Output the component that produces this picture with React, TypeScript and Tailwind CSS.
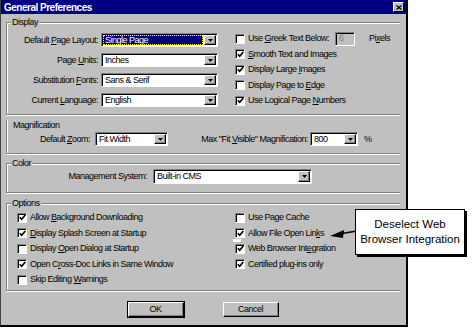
import React from "react";

const Mn = ({ t, i }: { t: string; i?: number }) =>
  i === undefined ? (
    <>{t}</>
  ) : (
    <>
      {t.slice(0, i)}
      <u>{t[i]}</u>
      {t.slice(i + 1)}
    </>
  );

function Box({ on }: { on?: boolean }) {
  return (
    <span className="flex h-[10px] w-[10px] shrink-0 items-center justify-center border border-t-[#808080] border-l-[#808080] border-b-white border-r-white bg-white shadow-[inset_1px_1px_0_#000]">
      {on && (
        <svg width="7" height="7" viewBox="0 0 7 7">
          <path d="M0.8 3.2 L2.7 5.3 L6.3 1" fill="none" stroke="#000" strokeWidth="1.6" />
        </svg>
      )}
    </span>
  );
}

function Check({ t, i, on }: { t: string; i?: number; on?: boolean }) {
  return (
    <div className="flex h-[15.5px] items-center gap-[3px] whitespace-nowrap">
      <Box on={on} />
      <span>
        <Mn t={t} i={i} />
      </span>
    </div>
  );
}

function Drop() {
  return (
    <div className="flex w-[12px] shrink-0 items-center justify-center border border-t-white border-l-white border-b-black border-r-black bg-[#c0c0c0] shadow-[inset_-1px_-1px_0_#808080]">
      <svg width="5" height="3" viewBox="0 0 5 3">
        <path d="M0 0h5L2.5 3z" fill="#000" />
      </svg>
    </div>
  );
}

function Select({ value, className, sel }: { value: string; className: string; sel?: boolean }) {
  return (
    <div
      className={`flex border border-t-[#808080] border-l-[#808080] border-b-white border-r-white bg-white p-[1px] shadow-[inset_1px_1px_0_#000] ${className}`}
    >
      <div
        className={`mr-[1px] flex flex-1 items-center whitespace-nowrap pl-[2px] ${
          sel ? "bg-[#000080] text-white outline outline-1 -outline-offset-1 outline-dotted outline-[#ffff00]" : ""
        }`}
      >
        {value}
      </div>
      <Drop />
    </div>
  );
}

function Group({ label, className, children }: { label: string; className: string; children: React.ReactNode }) {
  return (
    <div
      className={`relative border-t border-l border-b border-[#808080] shadow-[inset_1px_1px_0_#fff,0_1px_0_#fff] ${className}`}
    >
      <span className="absolute -top-[6px] left-[4px] bg-[#c0c0c0] px-[1px] leading-[11px]">{label}</span>
      {children}
    </div>
  );
}

function Button({ label, def }: { label: string; def?: boolean }) {
  return (
    <div
      className={`flex h-[15px] w-[56px] items-center justify-center border border-t-white border-l-white border-b-black border-r-black bg-[#c0c0c0] shadow-[inset_-1px_-1px_0_#808080] ${
        def ? "outline outline-1 outline-black" : ""
      }`}
    >
      {label}
    </div>
  );
}

export default function App() {
  const selRows: [string, number, string, boolean?][] = [
    ["Default Page Layout:", 8, "Single Page", true],
    ["Page Units:", 5, "Inches"],
    ["Substitution Fonts:", 13, "Sans & Serif"],
    ["Current Language:", 8, "English"],
  ];

  return (
    <div className="relative h-[329px] w-[473px] overflow-hidden bg-white font-['Liberation_Sans',Arial,sans-serif] text-[9px] leading-[11px] tracking-[-0.5px] text-black">
      <div className="flex h-[327px] w-[408px] flex-col border-l border-r-2 border-b-2 border-l-[#404040] border-r-black border-b-black bg-[#c0c0c0]">
        {/* title bar */}
        <div className="flex h-[14px] items-center justify-between bg-[#000080] pl-[3px] pr-[2px]">
          <span className="text-[10px] font-bold text-white">General Preferences</span>
          <div className="flex h-[10px] w-[11px] items-center justify-center border border-t-white border-l-white border-b-black border-r-black bg-[#c0c0c0]">
            <svg width="6" height="5" viewBox="0 0 6 5">
              <path d="M0.5 0.5 L5.5 4.5 M5.5 0.5 L0.5 4.5" stroke="#000" strokeWidth="1.3" />
            </svg>
          </div>
        </div>

        <div className="flex flex-col pl-[5px] pr-[6px]">
          {/* Display */}
          <Group label="Display" className="mt-[8px] h-[93px]">
            <div className="flex pt-[10px]">
              <div className="flex flex-col gap-[6px]">
                {selRows.map(([l, i, v, s]) => (
                  <div key={l} className="flex h-[14px] items-center">
                    <span className="w-[91px] text-right">
                      <Mn t={l} i={i} />
                    </span>
                    <Select value={v} sel={s} className="ml-[3px] h-[14px] w-[117px]" />
                  </div>
                ))}
              </div>
              <div className="-mt-[2px] ml-[17px] flex flex-col">
                <div className="flex h-[15.5px] items-center whitespace-nowrap">
                  <Box />
                  <span className="ml-[3px]">
                    Use <u>G</u>reek Text Below:
                  </span>
                  <div className="ml-[6px] flex h-[14px] w-[20px] items-center border border-t-[#808080] border-l-[#808080] border-b-white border-r-white pl-[3px] text-[#808080] shadow-[inset_1px_1px_0_#000]">
                    6
                  </div>
                  <span className="ml-[14px]">
                    Pi<u>x</u>els
                  </span>
                </div>
                <Check t="Smooth Text and Images" i={0} on />
                <Check t="Display Large Images" i={14} on />
                <Check t="Display Page to Edge" i={16} />
                <Check t="Use Logical Page Numbers" i={17} on />
              </div>
            </div>
          </Group>

          {/* Magnification */}
          <div className="mt-[5px] h-[34px] border-l border-b border-[#808080] shadow-[inset_1px_0_0_#fff,0_1px_0_#fff]">
            <div className="pl-[6px]">Magnification</div>
            <div className="mt-[1px] flex h-[14px] items-center whitespace-nowrap">
              <span className="w-[83px] text-right">
                Default <u>Z</u>oom:
              </span>
              <Select value="Fit Width" className="ml-[5px] h-[14px] w-[73px]" />
              <span className="ml-[20px] w-[120px] text-right">
                Max "Fit <u>V</u>isible" Magnification:
              </span>
              <Select value="800" className="ml-[2px] h-[14px] w-[48px]" />
              <span className="ml-[6px]">%</span>
            </div>
          </div>

          {/* Color */}
          <Group label="Color" className="mt-[9px] h-[30px]">
            <div className="flex h-[23px] items-end pb-[3px]">
              <span className="w-[140px] text-right leading-[15px]">Management System:</span>
              <Select value="Built-in CMS" className="ml-[6px] h-[15px] w-[159px]" />
            </div>
          </Group>

          {/* Options */}
          <Group label="Options" className="mt-[10px] h-[88px]">
            <div className="flex pt-[6px]">
              <div className="flex w-[228px] flex-col pl-[10px]">
                <Check t="Allow Background Downloading" i={6} on />
                <Check t="Display Splash Screen at Startup" i={0} on />
                <Check t="Display Open Dialog at Startup" i={8} />
                <Check t="Open Cross-Doc Links in Same Window" i={6} on />
                <Check t="Skip Editing Warnings" i={13} />
              </div>
              <div className="flex flex-col">
                <Check t="Use Page Cache" i={6} />
                <Check t="Allow File Open Links" i={19} on />
                <Check t="Web Browser Integration" i={15} on />
                <Check t="Certified plug-ins only" on />
              </div>
            </div>
          </Group>

          <div className="mt-[11px] flex justify-center gap-[39px]">
            <Button label="OK" def />
            <Button label="Cancel" />
          </div>
        </div>
      </div>

      {/* stray white patch from the original capture */}
      <div className="absolute left-[233px] top-[239px] h-[3px] w-[8px] bg-white" />

      {/* callout arrow */}
      <svg className="absolute left-[326px] top-[226px]" width="32" height="16" viewBox="0 0 32 16">
        <path d="M4 10 L18 4 L17 12 Z" fill="#000" />
        <path d="M16 7.5 L31 5" stroke="#000" strokeWidth="1.3" fill="none" />
      </svg>

      {/* callout */}
      <div className="absolute left-[355px] top-[209px] flex h-[46px] w-[110px] flex-col items-center justify-center border border-black bg-white text-[11.5px] leading-[15px] tracking-normal shadow-[2px_2px_0_#000]">
        <span>Deselect Web</span>
        <span>Browser Integration</span>
      </div>
    </div>
  );
}
